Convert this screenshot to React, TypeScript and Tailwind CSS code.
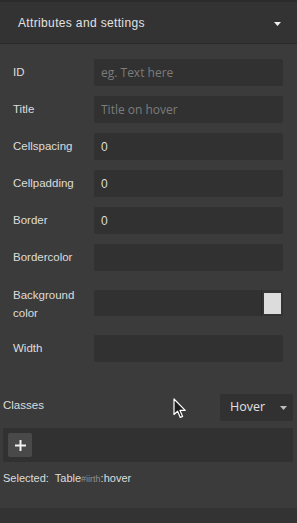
import React from 'react';

const traits = [
  { label: 'ID', placeholder: 'eg. Text here' },
  { label: 'Title', placeholder: 'Title on hover' },
  { label: 'Cellspacing', value: '0' },
  { label: 'Cellpadding', value: '0' },
  { label: 'Border', value: '0' },
  { label: 'Bordercolor' },
];

const TraitInput = ({ value, placeholder }: { value?: string; placeholder?: string }) => (
  <input
    readOnly
    defaultValue={value}
    placeholder={placeholder}
    className="flex-1 min-w-0 h-[27px] bg-[#313131] rounded-[2px] px-[7px] text-[12px] text-[#dddddd] outline-none placeholder:text-[#7c7c7c] placeholder:font-['Open_Sans']"
  />
);

const App = () => {
  return (
    <div className="relative w-[297px] h-[523px] bg-[#3b3b3b] font-['Liberation_Sans',Arial,sans-serif] text-[#dddddd] overflow-hidden">
      <div className="h-[2px] bg-[#2c2c2c]" />
      {/* Sector header */}
      <div className="h-[42px] bg-[#333333] border-b border-[#2a2a2a] flex items-center justify-between pl-[18px] pr-[16px]">
        <span className="text-[12px] tracking-[0.35px] text-[#e2e2e2]">Attributes and settings</span>
        <svg width="7" height="4" viewBox="0 0 7 4" className="mt-[3px]">
          <path d="M0 0H7L3.5 4Z" fill="#f0f0f0" />
        </svg>
      </div>

      {/* Traits */}
      <div className="flex flex-col gap-[10px] pt-[15px] pr-[14px]">
        {traits.map((t) => (
          <div key={t.label} className="flex items-center h-[27px]">
            <div className="w-[94px] shrink-0 pl-[13px] text-[11.5px] leading-[18px] mt-[-2px]">{t.label}</div>
            <TraitInput value={t.value} placeholder={t.placeholder} />
          </div>
        ))}
        <div className="flex items-center h-[44px]">
          <div className="w-[94px] shrink-0 pl-[13px] text-[11.5px] leading-[18px] pt-[1px]">
            Background
            <br />
            color
          </div>
          <div className="flex-1 h-[26px] bg-[#313131] rounded-[2px] flex justify-end">
            <div className="w-[22px] h-full border-l border-[#262626] bg-[#333333] flex items-center justify-center">
              <div className="w-[17px] h-[21px] bg-[#dcdcdc]" />
            </div>
          </div>
        </div>
        <div className="flex items-center h-[27px]">
          <div className="w-[94px] shrink-0 pl-[13px] text-[11.5px] leading-[18px] mt-[-2px]">Width</div>
          <TraitInput />
        </div>
      </div>

      {/* Classes */}
      <div className="pl-[3px] pr-[4px] mt-[32px] h-[146px]">
        <div className="flex items-center justify-between h-[27px]">
          <span className="text-[11.5px] mt-[-3px]">Classes</span>
          <div className="w-[73px] h-[27px] bg-[#313131] rounded-[2px] flex items-center justify-between pl-[10px] pr-[6px]">
            <span className="text-[12.5px] font-['Open_Sans'] text-[#e0e0e0]">Hover</span>
            <svg width="7" height="4" viewBox="0 0 7 4">
              <path d="M0 0H7L3.5 4Z" fill="#bdbdbd" />
            </svg>
          </div>
        </div>
        <div className="mt-[7px] h-[34px] bg-[#313131] rounded-[2px] flex items-center px-[5px]">
          <div className="w-[24px] h-[24px] bg-[#494949] rounded-[2px] flex items-center justify-center">
            <svg width="11" height="11" viewBox="0 0 11 11">
              <path d="M5.5 0V11M0 5.5H11" stroke="#f2f2f2" strokeWidth="2" />
            </svg>
          </div>
        </div>
        <div className="mt-[8px] text-[11px] leading-[16px]">
          Selected:&nbsp; Table<span className="text-[9px] text-[#8f8f8f]">#iirth</span>:hover
        </div>
      </div>
      <div className="absolute left-0 right-0 bottom-0 h-[15px] bg-[#333333]" />

      {/* Mouse pointer */}
      <svg className="absolute left-[173px] top-[398px]" width="14" height="21" viewBox="0 0 14 21">
        <path
          d="M1 1V16.5L4.6 13.2L7.3 19.4L9.6 18.4L7 12.4H12.2Z"
          fill="#1c1c1c"
          stroke="#ffffff"
          strokeWidth="1.2"
          strokeLinejoin="round"
        />
      </svg>
    </div>
  );
};

export default App;
